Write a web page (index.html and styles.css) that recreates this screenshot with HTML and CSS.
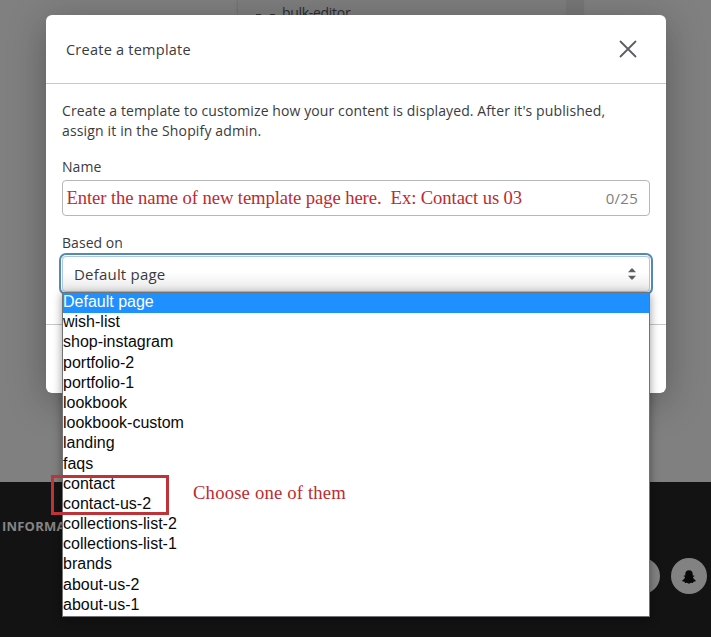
FILE: index.html
```html
<!DOCTYPE html>
<html lang="en">
<head>
<meta charset="utf-8">
<title>Create a template</title>
<link rel="stylesheet" href="styles.css">
</head>
<body>
<div class="page">
  <div class="backdrop">
    <div class="panel"><span class="dots"><i></i><i></i></span><span class="panel-text">bulk-editor</span></div>
  </div>
  <footer class="footer">
    <strong class="footer-title">INFORMA</strong>
    <div class="social">
      <span class="circle"></span>
      <span class="circle">
        <svg width="14" height="14" viewBox="0 0 14 14"><path d="M7 .3C4.700 .3 3.300 1.900 3.300 4v1.500l-1.500.1-.2.7 1.500.8C2.700 8.700 1.700 9.900.2 10.400l.2.900 2.100.5.5 1.100 1.900-.2L7 13.800l2.100-1.100 1.900.2.500-1.100 2.100-.5.2-.9c-1.500-.5-2.500-1.700-2.900-3.300l1.500-.8-.2-.7-1.500-.1V4C10.700 1.900 9.300.3 7 .3Z"/></svg>
      </span>
    </div>
  </footer>

  <section class="modal">
    <header class="modal-head">
      <h1 class="title">Create a template</h1>
      <svg class="close" width="18" height="18" viewBox="0 0 18 18"><path d="M1.500 1.500l15 15M16.500 1.500l-15 15"/></svg>
    </header>
    <div class="modal-body">
      <p class="intro"><span class="line-one">Create a template to customize how your content is displayed. After it's published,</span><br><span class="line-two">assign it in the Shopify admin.</span></p>
      <label class="label name-label">Name</label>
      <div class="input"><span class="note">Enter the name of new template page here.&nbsp; Ex: Contact us 03</span><span class="count">0/25</span></div>
      <label class="label based-label">Based on</label>
      <div class="select"><span class="value">Default page</span>
        <svg width="8" height="12" viewBox="0 0 8 12"><path d="M0 4.200L3.400.4h1.200L8 4.200ZM0 7.800h8L4.600 11.600H3.400Z"/></svg>
      </div>
    </div>
    <div class="modal-foot"></div>
  </section>

  <ul class="menu">
    <li class="active">Default page</li>
    <li>wish-list</li>
    <li>shop-instagram</li>
    <li>portfolio-2</li>
    <li>portfolio-1</li>
    <li>lookbook</li>
    <li>lookbook-custom</li>
    <li>landing</li>
    <li>faqs</li>
    <li>contact</li>
    <li>contact-us-2</li>
    <li>collections-list-2</li>
    <li>collections-list-1</li>
    <li>brands</li>
    <li>about-us-2</li>
    <li>about-us-1</li>
  </ul>
  <div class="highlight"></div>
  <span class="note choose">Choose one of them</span>
</div>
</body>
</html>
```
FILE: styles.css
```css
* { box-sizing: border-box; }
body { margin: 0; background: #fff; font-family: "Open Sans", "Noto Sans", sans-serif; color: #3a3b3d; }
.page { position: relative; width: 711px; height: 638px; overflow: hidden; display: flex; flex-direction: column; }
.backdrop { height: 482px; background: #808080; display: flex; }
.panel { margin-left: 238px; width: 346px; height: 60px; background: #7e7e7e; border-right: 18px solid #777; box-shadow: -1px 0 2px #727272; display: flex; font-size: 14px; line-height: 20px; color: #2b2b2b; }
.dots { display: flex; gap: 9px; width: 44px; padding: 14px 0 0 18px; }
.dots i { width: 5px; height: 2px; background: #333; }
.panel-text { margin-top: 3px; letter-spacing: -.3px; }
.footer { height: 155px; background: #131313; display: flex; align-items: flex-start; justify-content: space-between; padding: 35px 4px 0 2px; }
.footer-title { width: 60px; overflow: hidden; font: 700 13px/18px "Open Sans", sans-serif; color: #858585; letter-spacing: .2px; }
.social { display: flex; gap: 11px; margin-top: 41px; }
.circle { width: 36px; height: 36px; border-radius: 50%; background: #828282; display: flex; align-items: center; justify-content: center; }
.circle svg { fill: #080808; margin-top: 2px; }

.modal { position: absolute; left: 46px; top: 15px; width: 620px; height: 378px; background: #fff; border-radius: 6px; box-shadow: 0 8px 36px rgba(25,28,34,.38); overflow: hidden; }
.modal-head { height: 69px; border-bottom: 1px solid #c5c7c8; display: flex; align-items: center; justify-content: space-between; padding: 0 29px 0 20px; }
.title { margin: 1px 0 0; font-size: 14.500px; letter-spacing: .24px; font-weight: 400; line-height: 20px; }
.close { fill: none; stroke: #5c5f62; stroke-width: 1.800; stroke-linecap: round; }
.modal-body { height: 240px; padding: 17px 16px 0; }
.intro { margin: 0; font-size: 14px; line-height: 20px; }
.line-one { letter-spacing: .1px; }
.line-two { letter-spacing: .15px; }
.label { display: block; font-size: 14px; line-height: 20px; letter-spacing: .05px; }
.name-label { margin-top: 16px; }
.input { height: 36px; margin-top: 3px; border: 1px solid #b5b7b9; border-radius: 4px; display: flex; align-items: center; justify-content: space-between; padding: 0 11px 0 3.500px; }
.note { font-family: "Liberation Serif", serif; font-size: 18.670px; line-height: 22px; letter-spacing: -.1px; color: #be2b30; white-space: nowrap; }
.count { font-size: 15px; letter-spacing: .25px; color: #7c7f81; }
.based-label { margin-top: 17px; }
.select { height: 36px; margin-top: 3px; border: 1px solid #a9c9e0; border-radius: 4px; box-shadow: 0 0 0 1px #fff, 0 0 0 3px #5689b0; background: linear-gradient(#fff 45%, #e9e9e9); display: flex; align-items: center; justify-content: space-between; padding: 0 13px 0 11px; }
.select svg { fill: #5c5f62; }
.value { font-size: 15px; letter-spacing: .2px; }
.modal-foot { height: 69px; border-top: 1px solid #c5c7c8; }

.menu { position: absolute; left: 62px; top: 292px; width: 588px; height: 325px; margin: 0; padding: 0; list-style: none; background: #fff; border: 1px solid #707478; box-shadow: 0 2px 9px rgba(0,0,0,.4); font: 16px/20.200px "Liberation Sans", sans-serif; color: #0a0a0a; display: flex; flex-direction: column; }
.menu li { height: 20.200px; line-height: 18px; }
.menu .active { background: #1e90ff; color: #fff; }
.highlight { position: absolute; left: 51px; top: 475px; width: 118px; height: 40px; border: 3px solid #be3238; }
.choose { position: absolute; left: 193px; top: 482px; letter-spacing: .18px; }
```
